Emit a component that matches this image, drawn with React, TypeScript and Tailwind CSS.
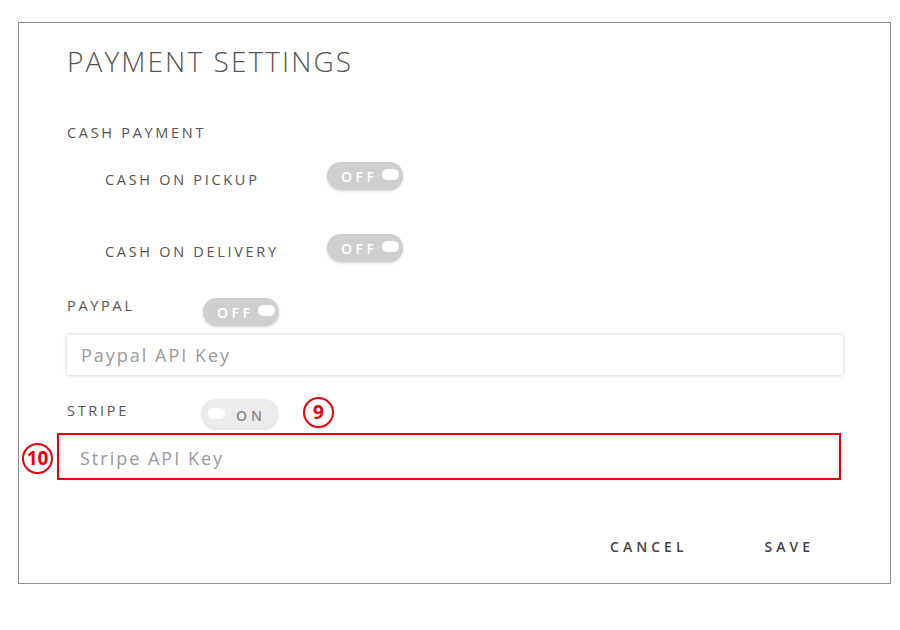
import React from 'react'

function Toggle({ on }: { on: boolean }) {
  if (on) {
    return (
      <div className="relative shrink-0 w-[76px] h-[29px] rounded-full bg-[#ececec] shadow-[0_1px_3px_rgba(0,0,0,0.18)] flex items-center pl-[34px]">
        <div className="absolute left-[6px] top-[9px] w-[17px] h-[11px] rounded-full bg-white" />
        <span className="text-[14px] font-semibold tracking-[4px] text-[#8a8a8a] mt-[4px]">ON</span>
      </div>
    )
  }
  return (
    <div className="relative shrink-0 w-[76px] h-[28px] rounded-full bg-[#cfcfcf] shadow-[0_1px_3px_rgba(0,0,0,0.18)] flex items-center pl-[14px]">
      <span className="text-[14px] font-semibold tracking-[3.5px] text-white">OFF</span>
      <div className="absolute right-[4px] top-[7px] w-[17px] h-[11px] rounded-full bg-white" />
    </div>
  )
}

function Badge({ n }: { n: string }) {
  return (
    <div className="absolute w-[31px] h-[31px] rounded-full border-2 border-[#e8000b] bg-white flex items-center justify-center text-[19px] font-bold text-[#e8000b] leading-none">
      {n}
    </div>
  )
}

const label = 'leading-[20px] text-[14.5px] tracking-[2.7px] text-[#555]'

export default function App() {
  return (
    <div className="w-[900px] h-[630px] bg-white pt-[22px] pl-[18px] font-['Open_Sans',sans-serif]">
      <div className="relative w-[873px] h-[562px] border border-[#8c8c8c] pl-[48px] pr-[48px]">
        <h1 className="mt-[20px] text-[28px] font-light tracking-[2.1px] text-[#555] leading-[36px]">
          PAYMENT SETTINGS
        </h1>

        <div className={`mt-[44px] ${label}`}>CASH PAYMENT</div>

        <div className="mt-[19px] h-[28px] flex items-start ml-[38px]">
          <span className={`w-[222px] mt-[8px] ${label}`}>CASH ON PICKUP</span>
          <Toggle on={false} />
        </div>

        <div className="mt-[44px] h-[28px] flex items-start ml-[38px]">
          <span className={`w-[222px] mt-[8px] ${label}`}>CASH ON DELIVERY</span>
          <Toggle on={false} />
        </div>

        <div className="mt-[36px] h-[28px] flex items-start">
          <span className={`w-[136px] -mt-[2px] ${label}`}>PAYPAL</span>
          <Toggle on={false} />
        </div>

        <div className="mt-[9px] w-[776px] h-[40px] bg-white shadow-[0_0_4px_rgba(0,0,0,0.22)] flex items-center pl-[14px] text-[18px] tracking-[2px] text-[#9a9a9a]">
          Paypal API Key
        </div>

        <div className="mt-[24px] h-[29px] flex items-start">
          <span className={`w-[135px] mt-[2px] ${label}`}>STRIPE</span>
          <Toggle on={true} />
        </div>

        <div className="mt-[10px] -ml-[6px] w-[776px] h-[40px] bg-white shadow-[0_0_4px_rgba(0,0,0,0.22)] flex items-center pl-[19px] text-[18px] tracking-[2px] text-[#9a9a9a]">
          Stripe API Key
        </div>

        <div className="mt-[58px] flex justify-end pr-[28px] gap-[77px] text-[14px] font-semibold tracking-[4px] text-[#444]">
          <button>CANCEL</button>
          <button>SAVE</button>
        </div>

        <div className="absolute left-[38px] top-[410px] w-[784px] h-[47px] border-2 border-[#e8000b]" />
        <div className="absolute left-[284px] top-[374px]"><Badge n="9" /></div>
        <div className="absolute left-[3px] top-[420px]"><Badge n="10" /></div>
      </div>
    </div>
  )
}
